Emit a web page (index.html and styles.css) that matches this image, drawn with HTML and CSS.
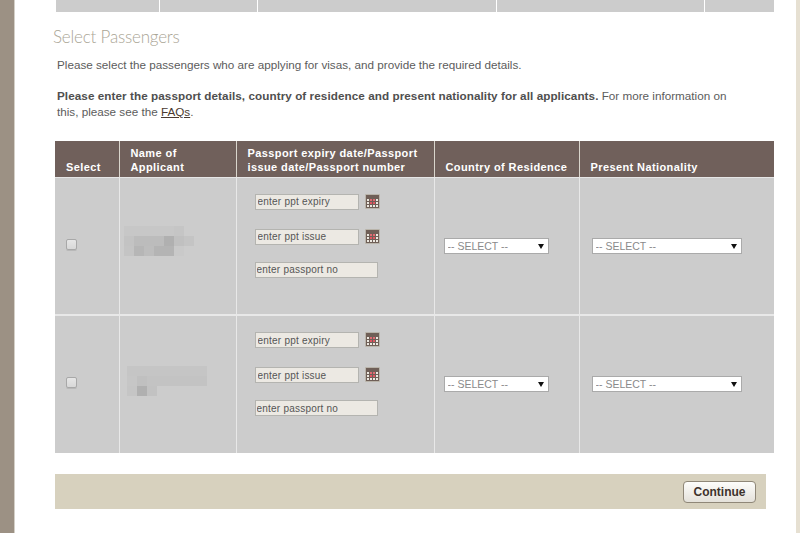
FILE: index.html
```html
<!DOCTYPE html>
<html lang="en">
<head>
  <meta charset="UTF-8">
  <meta name="viewport" content="width=device-width, initial-scale=1.0">
  <title>Select Passengers</title>
  <link rel="stylesheet" href="styles.css">
</head>
<body>
  <svg class="sprites" width="0" height="0" aria-hidden="true">
    <symbol id="cal" viewBox="0 0 15 15">
      <rect x="0" y="0" width="15" height="15" rx="1" fill="#b9b4aa"/>
      <rect x="1" y="1" width="13" height="13" fill="#6f5f57"/>
      <rect x="2" y="5" width="2" height="2" fill="#ece8e0"/>
      <rect x="5" y="5" width="2" height="2" fill="#e06a72"/>
      <rect x="8" y="5" width="2" height="2" fill="#e06a72"/>
      <rect x="11" y="5" width="2" height="2" fill="#ece8e0"/>
      <rect x="2" y="8" width="2" height="2" fill="#ece8e0"/>
      <rect x="5" y="8" width="2" height="2" fill="#de5560"/>
      <rect x="8" y="8" width="2" height="2" fill="#de5560"/>
      <rect x="11" y="8" width="2" height="2" fill="#ece8e0"/>
      <rect x="2" y="11" width="2" height="2" fill="#ece8e0"/>
      <rect x="5" y="11" width="2" height="2" fill="#ece8e0"/>
      <rect x="8" y="11" width="2" height="2" fill="#ece8e0"/>
      <rect x="11" y="11" width="2" height="2" fill="#ece8e0"/>
    </symbol>
  </svg>

  <div class="page">
    <div class="content">
      <div class="prev-table">
        <div></div><div></div><div></div><div></div><div></div>
      </div>

      <h2 class="title">Select Passengers</h2>
      <p class="intro">Please select the passengers who are applying for visas, and provide the required details.</p>
      <p class="intro"><strong>Please enter the passport details, country of residence and present nationality for all applicants.</strong> For more information on this, please see the <a href="#">FAQs</a>.</p>

      <table class="pax">
        <colgroup>
          <col class="c1"><col class="c2"><col class="c3"><col class="c4"><col class="c5">
        </colgroup>
        <thead>
          <tr>
            <th>Select</th>
            <th>Name of Applicant</th>
            <th>Passport expiry date/Passport issue date/Passport number</th>
            <th>Country of Residence</th>
            <th>Present Nationality</th>
          </tr>
        </thead>
        <tbody>
          <tr>
            <td><input type="checkbox" class="check"></td>
            <td>
              <svg class="blur one" width="70" height="30">
                <rect x="0" y="0" width="50" height="10" fill="#c7c7c7"/>
                <rect x="50" y="0" width="10" height="10" fill="#c5c5c5"/>
                <rect x="0" y="10" width="10" height="10" fill="#c3c3c3"/>
                <rect x="10" y="10" width="30" height="10" fill="#bcbcbc"/>
                <rect x="40" y="10" width="10" height="10" fill="#b0b0b0"/>
                <rect x="50" y="10" width="10" height="10" fill="#c0c0c0"/>
                <rect x="60" y="10" width="10" height="10" fill="#c4c4c4"/>
                <rect x="0" y="20" width="10" height="10" fill="#c4c4c4"/>
                <rect x="10" y="20" width="10" height="10" fill="#b6b6b6"/>
                <rect x="20" y="20" width="10" height="10" fill="#bdbdbd"/>
                <rect x="30" y="20" width="20" height="10" fill="#b4b4b4"/>
                <rect x="50" y="20" width="10" height="10" fill="#c9c9c9"/>
              </svg>
            </td>
            <td class="docs">
              <div class="date-row"><input class="field short" value="enter ppt expiry"><svg class="cal" width="15" height="15"><use href="#cal"/></svg></div>
              <div class="date-row second"><input class="field short" value="enter ppt issue"><svg class="cal" width="15" height="15"><use href="#cal"/></svg></div>
              <input class="field long" value="enter passport no">
            </td>
            <td><div class="pick narrow"><select><option>-- SELECT --</option></select></div></td>
            <td><div class="pick wide"><select><option>-- SELECT --</option></select></div></td>
          </tr>
          <tr>
            <td><input type="checkbox" class="check"></td>
            <td>
              <svg class="blur two" width="80" height="30">
                <rect x="0" y="0" width="80" height="10" fill="#c5c5c5"/>
                <rect x="0" y="10" width="80" height="10" fill="#c3c3c3"/>
                <rect x="0" y="10" width="10" height="10" fill="#c6c6c6"/>
                <rect x="10" y="10" width="10" height="10" fill="#c0c0c0"/>
                <rect x="0" y="20" width="10" height="10" fill="#c5c5c5"/>
                <rect x="10" y="20" width="10" height="10" fill="#b0b0b0"/>
                <rect x="20" y="20" width="10" height="10" fill="#c2c2c2"/>
              </svg>
            </td>
            <td class="docs">
              <div class="date-row"><input class="field short" value="enter ppt expiry"><svg class="cal" width="15" height="15"><use href="#cal"/></svg></div>
              <div class="date-row second"><input class="field short" value="enter ppt issue"><svg class="cal" width="15" height="15"><use href="#cal"/></svg></div>
              <input class="field long" value="enter passport no">
            </td>
            <td><div class="pick narrow"><select><option>-- SELECT --</option></select></div></td>
            <td><div class="pick wide"><select><option>-- SELECT --</option></select></div></td>
          </tr>
        </tbody>
      </table>

      <div class="actions">
        <button class="btn">Continue</button>
      </div>
    </div>
  </div>
</body>
</html>
```

FILE: styles.css
```css
html, body {
  margin: 0;
  height: 100%;
}
body {
  font-family: "Liberation Sans", Arial, sans-serif;
  font-size: 12px;
  color: #5c5c5c;
  background-color: #fff;
  overflow: hidden;
}
.sprites {
  display: block;
  height: 0;
}
.page {
  height: 533px;
  box-sizing: border-box;
  margin-right: 4px;
  border-left: 14px solid #9c9184;
  box-shadow: 4px 0 0 #e6e0d2;
  background: #fff;
}
.content {
  height: 100%;
  box-sizing: border-box;
  border-left: 1px solid #d4d0c8;
  padding: 0 22px 0 40px;
}
.prev-table {
  display: grid;
  grid-template-columns: 103px 97px 238px 207px 1fr;
  height: 12px;
  margin-left: 1px;
  gap: 1px;
}
.prev-table div {
  background: #ccc;
}
.title {
  margin: 14px 0 0 -2px;
  font-family: "Lato", sans-serif;
  font-size: 17px;
  font-weight: 300;
  line-height: 22px;
  letter-spacing: -0.2px;
  color: #aaa595;
}
.intro {
  margin: 9px 26px 0 2px;
  font-size: 11.7px;
  line-height: 16px;
}
.intro strong {
  letter-spacing: 0.07px;
  color: #4f4f4f;
}
.intro + .intro {
  margin-top: 15px;
}
.intro a {
  color: #4a3a30;
}
.pax {
  width: 719px;
  margin-top: 21px;
  border-collapse: collapse;
  table-layout: fixed;
  background: #ccc;
}
.c1 { width: 64px; }
.c2 { width: 117px; }
.c3 { width: 198px; }
.c4 { width: 145px; }
.c5 { width: 195px; }
.pax th {
  height: 36px;
  box-sizing: border-box;
  padding: 4px 0 3px 11px;
  background-color: #70605b;
  color: #fff;
  font-size: 11px;
  line-height: 14px;
  letter-spacing: 0.4px;
  text-align: left;
  vertical-align: bottom;
  border-left: 1px solid #d9d5cc;
  border-bottom: 1px solid #e6e6e6;
}
.pax th:nth-child(2),
.pax th:nth-child(3) {
  padding-right: 10px;
}
.pax th:first-child,
.pax td:first-child {
  border-left: 0;
}
.pax td {
  height: 138px;
  box-sizing: border-box;
  padding: 0 0 0 9px;
  border-left: 1px solid #e8e8e8;
  border-bottom: 2px solid #e8e8e8;
  vertical-align: middle;
}
.pax tbody tr:last-child td {
  padding-bottom: 2px;
  border-bottom: 0;
}
.pax tbody tr:last-child td.docs {
  padding-bottom: 0;
}
.pax th:first-child,
.pax td:first-child {
  padding-left: 11px;
}
.check {
  display: block;
  margin: -2px 0 0;
  width: 11px;
  height: 11px;
  appearance: none;
  border: 1px solid #a8a8a8;
  border-radius: 2px;
  background: linear-gradient(#e6e6e6, #d8d8d8);
  box-shadow: 0 1px 0 #b8b8b8;
}
.blur {
  display: block;
}
.blur.one {
  margin: -10px 0 0 -5px;
}
.blur.two {
  margin: -6px 0 0 -2px;
}
.pax td.docs {
  padding: 16px 0 0 18px;
  vertical-align: top;
}
.date-row {
  display: flex;
  align-items: flex-start;
  gap: 6px;
  margin-bottom: 19px;
}
.date-row.second {
  margin-bottom: 17px;
}
.field {
  display: block;
  box-sizing: border-box;
  height: 16px;
  padding: 0 2px 0 1px;
  border: 1px solid #b4b4b0;
  background: #ece9e3;
  font-family: "Liberation Sans", Arial, sans-serif;
  font-size: 10px;
  letter-spacing: 0.22px;
  color: #555;
}
.field.short {
  width: 104px;
  padding-left: 2px;
}
.field.long {
  width: 123px;
}
.pick {
  position: relative;
  height: 16px;
}
.pick::after {
  content: "";
  position: absolute;
  top: 6px;
  right: 5px;
  border-left: 3px solid transparent;
  border-right: 3px solid transparent;
  border-top: 5px solid #111;
}
.pick select {
  display: block;
  width: 100%;
  height: 100%;
  box-sizing: border-box;
  padding: 0 0 0 3px;
  appearance: none;
  border: 1px solid #aaa;
  border-radius: 0;
  background: #fff;
  font-family: "Liberation Sans", Arial, sans-serif;
  font-size: 10.5px;
  color: #8a8a8a;
}
.pick.narrow {
  width: 105px;
}
.pick.wide {
  width: 150px;
  margin-left: 3px;
}
.actions {
  display: flex;
  justify-content: flex-end;
  align-items: center;
  width: 711px;
  height: 35px;
  margin-top: 21px;
  padding-right: 10px;
  box-sizing: border-box;
  background: #d7d1be;
}
.btn {
  width: 73px;
  height: 22px;
  padding: 0;
  border: 1px solid #8f8778;
  border-radius: 4px;
  background: linear-gradient(#fdfdfb, #e4e1da);
  font-family: "Liberation Sans", Arial, sans-serif;
  font-size: 12px;
  font-weight: bold;
  color: #3d322c;
  cursor: pointer;
}
```
